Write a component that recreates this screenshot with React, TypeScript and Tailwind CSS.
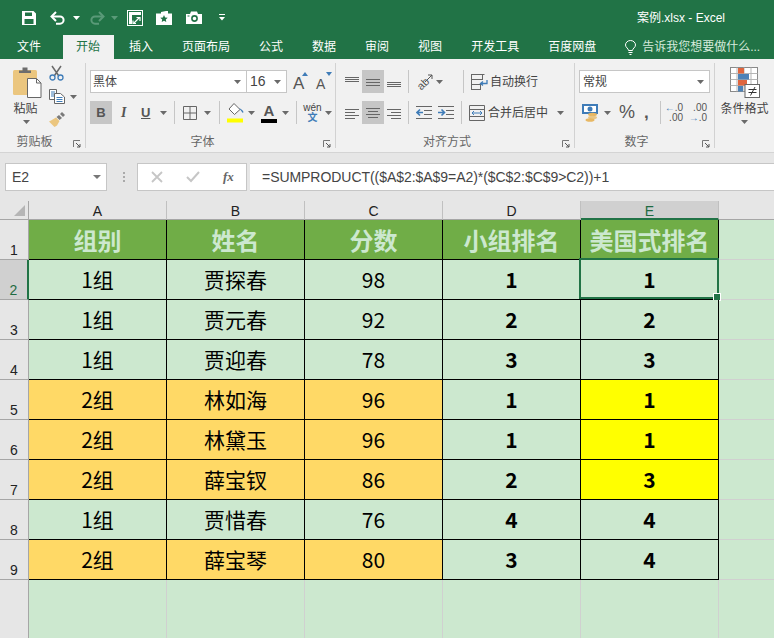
import type { ReactNode } from "react";

const Caret = ({ className = "" }: { className?: string }) => (
  <svg width="7" height="4" viewBox="0 0 7 4" className={`shrink-0 ${className}`}>
    <path d="M0 0h7L3.5 4z" fill="#6a6a6a" />
  </svg>
);

const Sep = ({ className = "" }: { className?: string }) => (
  <div className={`w-px h-[23px] bg-[#c6c6c6] shrink-0 ${className}`} />
);

const Launcher = () => (
  <svg width="8" height="8" viewBox="0 0 8 8" className="absolute right-[4px] bottom-[4px]">
    <path d="M.5 7V.5H7" fill="none" stroke="#777" />
    <path d="M3 3l4 4M7 4v3H4" fill="none" stroke="#555" />
  </svg>
);

const Group = ({ width, label, launcher = true, children }: { width: string; label?: string; launcher?: boolean; children: ReactNode }) => (
  <div className={`relative h-full flex flex-col shrink-0 ${width}`}>
    <div className="flex-1 min-h-0">{children}</div>
    {label && <div className="h-[20px] pr-[16px] text-center text-[12px] leading-[20px] text-[#666]">{label}</div>}
    {launcher && <Launcher />}
  </div>
);

const LineIcon = ({ lines }: { lines: [number, number, number][] }) => (
  <svg width="16" height="14" viewBox="0 0 16 14" className="shrink-0">
    {lines.map(([x1, x2, y]) => (
      <path key={y} d={`M${x1} ${y}.5H${x2}`} stroke="#666" />
    ))}
  </svg>
);

const SaveIcon = () => (
  <svg width="16" height="16" viewBox="0 0 16 16">
    <path fillRule="evenodd" d="M1 1h11.5L15 3.5V15H1zM4 2.500v3.500h7V2.500zM3.500 9v5h9V9z" fill="#fff" />
  </svg>
);

const UndoIcon = ({ color }: { color: string }) => (
  <svg width="16" height="14" viewBox="0 0 16 14">
    <path d="M2 5.500h8a3.600 3.600 0 0 1 0 7.200H6" fill="none" stroke={color} strokeWidth="2" />
    <path d="M6 1L1.500 5.500 6 10" fill="none" stroke={color} strokeWidth="2" />
  </svg>
);

const RedoIcon = () => (
  <svg width="16" height="14" viewBox="0 0 16 14">
    <path d="M14 5.500H6a3.600 3.600 0 0 0 0 7.200h4" fill="none" stroke="#5a9a78" strokeWidth="2" />
    <path d="M10 1l4.500 4.500L10 10" fill="none" stroke="#5a9a78" strokeWidth="2" />
  </svg>
);

const FreezeIcon = () => (
  <svg width="16" height="16" viewBox="0 0 16 16">
    <rect x=".5" y=".5" width="15" height="15" fill="none" stroke="#fff" />
    <path d="M2 2h3v12H2zM5 2h9v3H5z" fill="#fff" />
    <path d="M7 13l5-5M9.500 7.500H13V11M6 10.500v3h3" fill="none" stroke="#fff" strokeWidth="1.200" />
  </svg>
);

const FolderStarIcon = () => (
  <svg width="16" height="14" viewBox="0 0 16 14">
    <path d="M0 2.500h5V1l5-1h2v2.500h4V14H0z" fill="#fff" />
    <path d="M8 4l1.100 2.400 2.600.3-1.900 1.800.5 2.600L8 9.800l-2.300 1.300.5-2.600-1.900-1.800 2.600-.3z" fill="#217346" />
  </svg>
);

const CameraIcon = () => (
  <svg width="16" height="13" viewBox="0 0 16 13">
    <path d="M0 3h4l1-2.500h6L12 3h4v10H0z" fill="#fff" />
    <circle cx="8.500" cy="7.500" r="2.600" fill="none" stroke="#217346" strokeWidth="1.600" />
    <rect x="1.500" y="4.500" width="2" height="1" fill="#217346" />
  </svg>
);

const PasteIcon = () => (
  <svg width="29" height="31" viewBox="0 0 29 31">
    <rect x="0" y="3" width="24" height="25" rx="1.500" fill="#ebc67f" />
    <path d="M6 6V3.500h3.500V0.500h5V3.500H18V6z" fill="#6d6d6d" />
    <path d="M14.500 11.500h9l4.500 4.500v14.500H14.500z" fill="#fff" stroke="#666" />
    <path d="M23.500 11.500V16H28" fill="none" stroke="#666" />
  </svg>
);

const CutIcon = () => (
  <svg width="15" height="16" viewBox="0 0 15 16">
    <path d="M3 1l6.500 9.500M12 1L5.500 10.500" stroke="#6a6a6a" strokeWidth="1.500" fill="none" />
    <circle cx="3.500" cy="12.500" r="2.500" fill="none" stroke="#3f7cb8" strokeWidth="1.300" />
    <circle cx="11.500" cy="12.500" r="2.500" fill="none" stroke="#3f7cb8" strokeWidth="1.300" />
  </svg>
);

const CopyIcon = () => (
  <svg width="16" height="15" viewBox="0 0 16 15">
    <path d="M.5.500h7v10h-7z" fill="#fff" stroke="#666" />
    <path d="M2 3h4M2 5h4M2 7h4" stroke="#3f7cb8" />
    <path d="M5.500 4.500h6l4 3.500v6.500h-10z" fill="#fff" stroke="#666" />
    <path d="M7.500 8.500h6M7.500 10.500h6M7.500 12.500h6" stroke="#3f7cb8" />
  </svg>
);

const BrushIcon = () => (
  <svg width="16" height="15" viewBox="0 0 16 15">
    <path d="M10 3l3 3-2.500 2-3-3z" fill="#7a7a7a" />
    <path d="M11 2l2-2 3 3-2 2z" fill="#7a7a7a" />
    <path d="M7 5.500l3.500 3.500L8 13.500 5.500 15 0 9.500l2-1z" fill="#ebc67f" />
  </svg>
);

const BorderIcon = () => (
  <svg width="14" height="14" viewBox="0 0 14 14">
    <path d="M.5.500h13v13H.5zM7 .5v13M.5 7h13" fill="none" stroke="#666" />
  </svg>
);

const FillIcon = () => (
  <svg width="17" height="20" viewBox="0 0 17 20">
    <path d="M7 .5l6 6-5.500 5L2 6z" fill="#fff" stroke="#666" />
    <path d="M12 5c2 1 4 2 4.500 4 0 1-1.500 1-1.500 0z" fill="#3f7cb8" />
    <rect x="0" y="15.500" width="16" height="4" fill="#ffff00" />
  </svg>
);

const WrapIcon = () => (
  <svg width="17" height="16" viewBox="0 0 17 16">
    <path d="M.5.500h13M.5.500v15h9M.5 5.500h8M.5 10.500h8" fill="none" stroke="#666" />
    <rect x=".5" y=".5" width="11" height="5" fill="none" stroke="#666" />
    <rect x=".5" y="10.500" width="9" height="5" fill="none" stroke="#666" />
    <path d="M16 6v3.500h-6M12 7.500l-2.500 2 2.500 2" fill="none" stroke="#3f7cb8" strokeWidth="1.300" />
  </svg>
);

const MergeIcon = () => (
  <svg width="16" height="16" viewBox="0 0 16 16">
    <path d="M.5.500h15v15H.5zM.5 4.500h15M.5 11.500h15" fill="none" stroke="#666" />
    <path d="M3 8h10M5 6L3 8l2 2M11 6l2 2-2 2" fill="none" stroke="#3f7cb8" />
  </svg>
);

const IndentIcon = ({ flip = false }: { flip?: boolean }) => (
  <svg width="16" height="13" viewBox="0 0 16 13">
    <path d="M0 .5h16M0 12.500h16M8 4.500h8M8 8.500h8" stroke="#666" />
    {flip ? (
      <path d="M0 6.500h6M3.500 3.500l3 3-3 3" fill="none" stroke="#3f7cb8" strokeWidth="1.600" />
    ) : (
      <path d="M1 6.500h6M4 3.500l-3 3 3 3" fill="none" stroke="#3f7cb8" strokeWidth="1.600" />
    )}
  </svg>
);

const CurrencyIcon = () => (
  <svg width="17" height="18" viewBox="0 0 17 18">
    <rect x="0" y="0" width="16" height="10" fill="#3f7cb8" />
    <rect x="2" y="2" width="12" height="6" fill="#fff" />
    <circle cx="8" cy="5" r="2.500" fill="#3f7cb8" />
    <ellipse cx="10.500" cy="10.500" rx="4.500" ry="1.800" fill="#e8b864" />
    <ellipse cx="10.500" cy="13.500" rx="4.500" ry="1.800" fill="#eac787" />
    <ellipse cx="8" cy="16" rx="4.500" ry="1.800" fill="#e8b864" />
  </svg>
);

const CondFormatIcon = () => (
  <svg width="30" height="31" viewBox="0 0 30 31">
    <rect x=".5" y=".5" width="27" height="24" fill="#fff" stroke="#8a8a8a" />
    <path d="M7 .5v24M14 .5v24M21 .5v24M.5 6.500h27M.5 12.500h27M.5 18.500h27" stroke="#b5b5b5" />
    <rect x="8" y="1" width="6" height="5.500" fill="#e0663f" />
    <rect x="8" y="7" width="11" height="5.500" fill="#4d82b8" />
    <rect x="8" y="13" width="9" height="5.500" fill="#e0663f" />
    <rect x="8" y="19" width="5" height="5.500" fill="#4d82b8" />
    <rect x="15" y="17.500" width="14.500" height="13" fill="#fff" stroke="#666" />
    <path d="M18.500 22.500h8M18.500 25.500h8M25 20l-4.500 8.500" stroke="#333" fill="none" />
  </svg>
);

const BulbIcon = () => (
  <svg width="11" height="15" viewBox="0 0 11 15">
    <path d="M3.500 10.500C3.500 8.500.5 7.500.5 5a5 4.500 0 0 1 10 0c0 2.500-3 3.500-3 5.500z" fill="none" stroke="#fff" />
    <path d="M3.500 12.500h4M4.500 14.500h2" stroke="#fff" />
  </svg>
);

const Combo = ({ width, text, className = "" }: { width: string; text: string; className?: string }) => (
  <div className={`h-[23px] bg-white border border-[#c6c6c6] flex items-center justify-between pl-[2px] pr-[5px] text-[#444] ${width} ${className}`}>
    <span>{text}</span>
    <Caret />
  </div>
);

const tabs = ["插入", "页面布局", "公式", "数据", "审阅", "视图", "开发工具", "百度网盘"];

type Row = { no: number; group: string; name: string; score: number; rank: number; us: number };

const rows: Row[] = [
  { no: 2, group: "1组", name: "贾探春", score: 98, rank: 1, us: 1 },
  { no: 3, group: "1组", name: "贾元春", score: 92, rank: 2, us: 2 },
  { no: 4, group: "1组", name: "贾迎春", score: 78, rank: 3, us: 3 },
  { no: 5, group: "2组", name: "林如海", score: 96, rank: 1, us: 1 },
  { no: 6, group: "2组", name: "林黛玉", score: 96, rank: 1, us: 1 },
  { no: 7, group: "2组", name: "薛宝钗", score: 86, rank: 2, us: 3 },
  { no: 8, group: "1组", name: "贾惜春", score: 76, rank: 4, us: 4 },
  { no: 9, group: "2组", name: "薛宝琴", score: 80, rank: 3, us: 4 },
];

const cellBase = "h-[40px] flex items-center justify-center border-r border-b border-black text-[21px] text-black";

const App = () => {
  return (
    <div className="w-[774px] h-[638px] overflow-hidden bg-[#cce8cf] font-['Liberation_Sans','Noto_Sans_CJK_SC',sans-serif]">
      {/* title bar */}
      <div className="bg-[#217346] text-white">
        <div className="h-[35px] flex items-center pl-[21px]">
          <SaveIcon />
          <div className="ml-[13px] flex items-center gap-[7px]">
            <UndoIcon color="#fff" />
            <svg width="7" height="4" viewBox="0 0 7 4"><path d="M0 0h7L3.500 4z" fill="#fff" /></svg>
          </div>
          <div className="ml-[9px] flex items-center gap-[6px]">
            <RedoIcon />
            <svg width="7" height="4" viewBox="0 0 7 4"><path d="M0 0h7L3.500 4z" fill="#5a9a78" /></svg>
          </div>
          <div className="ml-[9px]"><FreezeIcon /></div>
          <div className="ml-[13px]"><FolderStarIcon /></div>
          <div className="ml-[14px]"><CameraIcon /></div>
          <svg width="6" height="7" viewBox="0 0 6 7" className="ml-[17px]">
            <path d="M0 .5h6" stroke="#fff" />
            <path d="M0 3h6L3 6.500z" fill="#fff" />
          </svg>
          <div className="ml-[412px] text-[12px] whitespace-nowrap">案例.xlsx - Excel</div>
        </div>
        <div className="h-[24px] flex items-center gap-[29px] pl-[17px] text-[12px]">
          <span>文件</span>
          <span className="-ml-[7px] -mr-[14px] pl-[13px] pr-[14px] h-full leading-[24px] bg-[#f1f1f1] text-[#217346]">开始</span>
          {tabs.map((tab) => (
            <span key={tab} className="whitespace-nowrap">{tab}</span>
          ))}
          <div className="flex items-center gap-[6px]">
            <BulbIcon />
            <span className="whitespace-nowrap text-[#d6eadc]">告诉我您想要做什么...</span>
          </div>
        </div>
      </div>

      {/* ribbon */}
      <div className="h-[94px] flex bg-[#f1f1f1] border-b border-[#d4d4d4] text-[#444]">
        <Group width="w-[85px]" label="剪贴板">
          <div className="flex pl-[13px] pt-[6px]">
            <div className="w-[29px] flex flex-col items-center">
              <div className="mt-[2px]"><PasteIcon /></div>
              <div className="text-[12px] leading-[16px] mt-[3px] -ml-[4px] whitespace-nowrap">粘贴</div>
              <Caret className="mt-[3px] -ml-[3px]" />
            </div>
            <div className="ml-[7px] flex flex-col">
              <CutIcon />
              <div className="mt-[8px] flex items-center gap-[5px]"><CopyIcon /><Caret /></div>
              <div className="mt-[8px]"><BrushIcon /></div>
            </div>
          </div>
        </Group>
        <div className="w-px h-[85px] mt-[4px] bg-[#d2d2d2]" />
        <Group width="w-[249px]" label="字体">
          <div className="pl-[4px] pt-[11px]">
            <div className="flex items-center h-[23px]">
              <Combo width="w-[157px]" text="黑体" className="text-[12px]" />
              <Combo width="w-[40px]" text="16" className="border-l-0 pl-[3px] text-[14px]" />
              <div className="ml-[6px] w-[14px] h-[20px] relative text-[17px] leading-[23px] font-normal text-[#555]">
                A
                <svg width="6" height="4" viewBox="0 0 6 4" className="absolute -right-[1px] top-0"><path d="M0 4h6L3 0z" fill="#3f7cb8" /></svg>
              </div>
              <div className="ml-[9px] w-[14px] h-[20px] relative text-[14px] leading-[25px] text-[#555]">
                A
                <svg width="6" height="4" viewBox="0 0 6 4" className="absolute -right-[2px] top-0"><path d="M0 0h6L3 4z" fill="#3f7cb8" /></svg>
              </div>
            </div>
            <div className="mt-[8px] flex items-center h-[23px]">
              <div className="w-[22px] h-[23px] bg-[#c6c6c6] flex items-center justify-center text-[13px] font-bold text-[#555]">B</div>
              <span className="ml-[9px] w-[8px] text-[14px] italic font-bold text-[#555] font-['Liberation_Serif',serif]">I</span>
              <span className="ml-[12px] w-[10px] text-[13px] underline font-bold text-[#555]">U</span>
              <Caret className="ml-[9px]" />
              <Sep className="ml-[7px]" />
              <div className="ml-[8px]"><BorderIcon /></div>
              <Caret className="ml-[7px]" />
              <Sep className="ml-[8px]" />
              <div className="ml-[7px]"><FillIcon /></div>
              <Caret className="ml-[4px]" />
              <div className="ml-[6px] w-[16px] h-[20px] flex flex-col items-center">
                <span className="text-[15px] leading-[15px] font-bold text-[#555]">A</span>
                <div className="w-[16px] h-[4px] mt-[1px] bg-black" />
              </div>
              <Caret className="ml-[5px]" />
              <Sep className="ml-[7px]" />
              <div className="ml-[7px] w-[17px] flex flex-col items-center leading-none">
                <span className="text-[10px] text-[#444]">wén</span>
                <span className="text-[10px] font-bold text-[#3f7cb8]">文</span>
              </div>
              <Caret className="ml-[4px]" />
            </div>
          </div>
        </Group>
        <div className="w-px h-[85px] mt-[4px] bg-[#d2d2d2]" />
        <Group width="w-[238px]" label="对齐方式">
          <div className="pl-[8px] pt-[11px]">
            <div className="flex items-center h-[23px]">
              <LineIcon lines={[[1, 15, 2], [1, 15, 4], [1, 15, 6]]} />
              <div className="ml-[2px] w-[22px] h-[23px] bg-[#c6c6c6] flex items-center justify-center">
                <LineIcon lines={[[1, 15, 4], [1, 15, 7], [1, 15, 10]]} />
              </div>
              <div className="ml-[2px]"><LineIcon lines={[[1, 15, 7], [1, 15, 9], [1, 15, 11]]} /></div>
              <Sep className="ml-[6px]" />
              <div className="ml-[7px] w-[17px] h-[16px] relative">
                <span className="block -rotate-45 text-[11px] leading-[16px] text-[#555]">ab</span>
                <svg width="8" height="8" viewBox="0 0 8 8" className="absolute right-0 top-0"><path d="M0 8l7-7M3 1h4v4" fill="none" stroke="#555" /></svg>
              </div>
              <Caret className="ml-[3px]" />
              <Sep className="ml-[20px]" />
              <div className="ml-[7px]"><WrapIcon /></div>
              <span className="ml-[2px] text-[12px] whitespace-nowrap">自动换行</span>
            </div>
            <div className="mt-[8px] flex items-center h-[23px]">
              <LineIcon lines={[[1, 15, 3], [1, 11, 6], [1, 15, 9], [1, 11, 12]]} />
              <div className="ml-[2px] w-[22px] h-[23px] bg-[#c6c6c6] flex items-center justify-center">
                <LineIcon lines={[[1, 15, 2], [3, 13, 5], [1, 15, 8], [3, 13, 11]]} />
              </div>
              <div className="ml-[2px]"><LineIcon lines={[[1, 15, 3], [5, 15, 6], [1, 15, 9], [5, 15, 12]]} /></div>
              <Sep className="ml-[6px]" />
              <div className="ml-[7px]"><IndentIcon /></div>
              <div className="ml-[6px]"><IndentIcon flip /></div>
              <Sep className="ml-[7px]" />
              <div className="ml-[7px]"><MergeIcon /></div>
              <span className="ml-[3px] text-[12px] whitespace-nowrap">合并后居中</span>
              <Caret className="ml-[9px]" />
            </div>
          </div>
        </Group>
        <div className="w-px h-[85px] mt-[4px] bg-[#d2d2d2]" />
        <Group width="w-[139px]" label="数字">
          <div className="pl-[4px] pt-[11px]">
            <Combo width="w-[131px]" text="常规" className="pl-[3px] text-[12px]" />
            <div className="mt-[8px] flex items-center h-[23px]">
              <div className="ml-[3px]"><CurrencyIcon /></div>
              <Caret className="ml-[5px]" />
              <span className="ml-[8px] text-[18px] text-[#555]">%</span>
              <span className="ml-[9px] w-[6px] text-[17px] font-bold leading-[12px] text-[#555]">,</span>
              <Sep className="ml-[10px]" />
              <div className="ml-[7px] flex flex-col text-[10px] leading-[10px] text-[#555] w-[15px] items-end whitespace-nowrap">
                <span><span className="text-[#3f7cb8]">←</span>.0</span>
                <span>.00</span>
              </div>
              <div className="ml-[9px] flex flex-col text-[10px] leading-[10px] text-[#555] w-[15px] items-end whitespace-nowrap">
                <span>.00</span>
                <span><span className="text-[#3f7cb8]">→</span>.0</span>
              </div>
            </div>
          </div>
        </Group>
        <div className="w-px h-[85px] mt-[4px] bg-[#d2d2d2]" />
        <Group width="flex-1" launcher={false}>
          <div className="flex flex-col items-center pt-[8px]">
            <CondFormatIcon />
            <div className="mt-[3px] text-[12px] leading-[16px] whitespace-nowrap">条件格式</div>
            <Caret className="mt-[3px]" />
          </div>
        </Group>
      </div>

      {/* formula bar */}
      <div className="h-[48px] bg-[#e6e6e6] flex pt-[10px] pl-[5px] text-[#444]">
        <div className="w-[102px] h-[28px] bg-white border border-[#c6c6c6] flex items-center justify-between pl-[6px] pr-[5px] text-[14px]">
          <span>E2</span>
          <svg width="8" height="4" viewBox="0 0 8 4"><path d="M0 0h8L4 4z" fill="#777" /></svg>
        </div>
        <div className="ml-[15px] w-[3px] h-[28px] flex flex-col items-center justify-center gap-[2px]">
          <div className="w-[2px] h-[2px] bg-[#aaa]" />
          <div className="w-[2px] h-[2px] bg-[#aaa]" />
          <div className="w-[2px] h-[2px] bg-[#aaa]" />
        </div>
        <div className="ml-[12px] w-[110px] h-[28px] bg-white border border-[#c6c6c6] flex items-center">
          <svg width="12" height="12" viewBox="0 0 12 12" className="ml-[13px]"><path d="M1 1l10 10M11 1L1 11" stroke="#c6c6c6" strokeWidth="1.800" /></svg>
          <svg width="14" height="12" viewBox="0 0 14 12" className="ml-[23px]"><path d="M1 6l4 4 8-9" fill="none" stroke="#c6c6c6" strokeWidth="2" /></svg>
          <span className="ml-[23px] text-[13px] italic font-bold text-[#666] font-['Liberation_Serif',serif]">fx</span>
        </div>
        <div className="ml-[3px] flex-1 h-[28px] bg-white border-y border-[#c6c6c6] pl-[12px] text-[14px] leading-[26px] tracking-[-0.05px] whitespace-nowrap">
          =SUMPRODUCT(($A$2:$A$9=A2)*($C$2:$C$9&gt;C2))+1
        </div>
      </div>

      {/* sheet */}
      <div className="grid grid-cols-[29px_138px_138px_138px_138px_138px_1fr] font-['Noto_Sans_CJK_SC',sans-serif]">
        <div className="h-[19px] bg-[#e6e6e6] border-r border-b border-[#a6a6a6] flex items-end justify-end pr-[3px] pb-[3px]">
          <svg width="11" height="11" viewBox="0 0 11 11"><path d="M0 11h11V0z" fill="#b5b5b5" /></svg>
        </div>
        {["A", "B", "C", "D"].map((col) => (
          <div key={col} className="h-[19px] bg-[#e6e6e6] border-r border-b border-r-[#c0c0c0] border-b-[#a6a6a6] text-center text-[14px] leading-[20px] text-[#222] font-['Liberation_Sans',sans-serif]">
            {col}
          </div>
        ))}
        <div className="h-[19px] bg-[#d0d0d0] border-r border-r-[#c0c0c0] border-b-2 border-b-[#217346] text-center text-[14px] leading-[20px] text-[#1f6b42] font-['Liberation_Sans',sans-serif]">
          E
        </div>
        <div className="h-[19px] bg-[#e6e6e6] border-b border-[#a6a6a6]" />

        <div className="h-[40px] bg-[#e6e6e6] border-r border-b border-[#a6a6a6] text-center text-[14px] leading-[61px] text-[#222] font-['Liberation_Sans',sans-serif]">
          1
        </div>
        {["组别", "姓名", "分数", "小组排名", "美国式排名"].map((title) => (
          <div key={title} className="h-[40px] flex items-center justify-center bg-[#70ad47] border-r border-b border-black text-[24px] font-bold text-[#cce8cf] whitespace-nowrap">
            {title}
          </div>
        ))}
        <div className="h-[40px] border-b border-[#d0d0d0]" />

        {rows.map((row) => {
          const fill = row.group === "2组" ? "bg-[#ffd966]" : "bg-[#cce8cf]";
          const selected = row.no === 2;
          return (
            <div key={row.no} className="contents">
              <div className={`h-[40px] border-b border-[#a6a6a6] text-center text-[14px] leading-[61px] font-['Liberation_Sans',sans-serif] ${selected ? "bg-[#d0d0d0] text-[#1f6b42] border-r-2 border-r-[#217346]" : "bg-[#e6e6e6] text-[#222] border-r border-r-[#a6a6a6]"}`}>
                {row.no}
              </div>
              <div className={`${cellBase} ${fill}`}>{row.group}</div>
              <div className={`${cellBase} ${fill}`}>{row.name}</div>
              <div className={`${cellBase} ${fill}`}>{row.score}</div>
              <div className={`${cellBase} bg-[#cce8cf] font-bold`}>{row.rank}</div>
              <div className={`${cellBase} relative font-bold ${row.no >= 5 && row.no <= 7 ? "bg-[#ffff00]" : "bg-[#cce8cf]"}`}>
                {row.us}
                {selected && (
                  <div className="absolute -left-[2px] -top-[2px] w-[140px] h-[41px] border-2 border-[#217346]">
                    <div className="absolute -right-[3px] -bottom-[3px] w-[6px] h-[6px] bg-[#217346] outline outline-1 outline-white" />
                  </div>
                )}
              </div>
              <div className="h-[40px] border-b border-[#d0d0d0]" />
            </div>
          );
        })}

        <div className="h-[58px] bg-[#e6e6e6] border-r border-[#a6a6a6]" />
        <div className="h-[58px] border-r border-[#d0d0d0]" />
        <div className="h-[58px] border-r border-[#d0d0d0]" />
        <div className="h-[58px] border-r border-[#d0d0d0]" />
        <div className="h-[58px] border-r border-[#d0d0d0]" />
        <div className="h-[58px] border-r border-[#d0d0d0]" />
        <div className="h-[58px]" />
      </div>
    </div>
  );
};

export default App;
